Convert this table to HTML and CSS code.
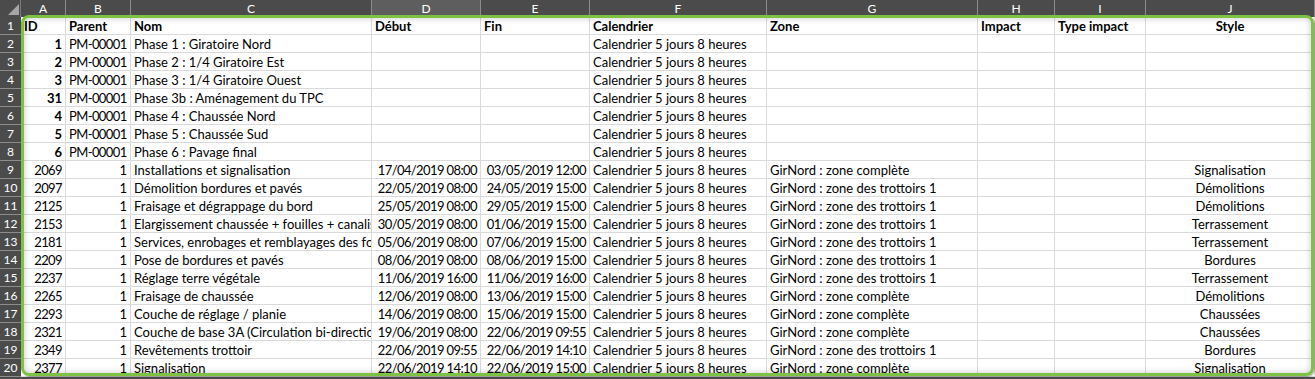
FILE: index.html
```html
<!DOCTYPE html>
<html lang="fr">
<head>
<meta charset="utf-8">
<title>Feuille</title>
<link rel="stylesheet" href="styles.css">
</head>
<body>
<div class="wrap">
  <div class="sheet">
    <div class="corner"><svg width="11" height="11" viewBox="0 0 11 11"><polygon points="11,0 11,11 0,11" fill="#a6a6a6"/></svg></div>
    <div class="ch">A</div><div class="ch">B</div><div class="ch">C</div><div class="ch ch-sel">D</div><div class="ch">E</div><div class="ch">F</div><div class="ch">G</div><div class="ch">H</div><div class="ch">I</div><div class="ch">J</div>

    <div class="rh">1</div><div class="c b">ID</div><div class="c b">Parent</div><div class="c b">Nom</div><div class="c b">Début</div><div class="c b">Fin</div><div class="c b">Calendrier</div><div class="c b">Zone</div><div class="c b">Impact</div><div class="c b">Type impact</div><div class="c b ctr">Style</div>

    <div class="rh">2</div><div class="c b r">1</div><div class="c n">PM-00001</div><div class="c">Phase 1 : Giratoire Nord</div><div class="c"></div><div class="c"></div><div class="c">Calendrier 5 jours 8 heures</div><div class="c"></div><div class="c"></div><div class="c"></div><div class="c"></div>
    <div class="rh">3</div><div class="c b r">2</div><div class="c n">PM-00001</div><div class="c">Phase 2 : 1/4 Giratoire Est</div><div class="c"></div><div class="c"></div><div class="c">Calendrier 5 jours 8 heures</div><div class="c"></div><div class="c"></div><div class="c"></div><div class="c"></div>
    <div class="rh">4</div><div class="c b r">3</div><div class="c n">PM-00001</div><div class="c">Phase 3 : 1/4 Giratoire Ouest</div><div class="c"></div><div class="c"></div><div class="c">Calendrier 5 jours 8 heures</div><div class="c"></div><div class="c"></div><div class="c"></div><div class="c"></div>
    <div class="rh">5</div><div class="c b r">31</div><div class="c n">PM-00001</div><div class="c">Phase 3b : Aménagement du TPC</div><div class="c"></div><div class="c"></div><div class="c">Calendrier 5 jours 8 heures</div><div class="c"></div><div class="c"></div><div class="c"></div><div class="c"></div>
    <div class="rh">6</div><div class="c b r">4</div><div class="c n">PM-00001</div><div class="c">Phase 4 : Chaussée Nord</div><div class="c"></div><div class="c"></div><div class="c">Calendrier 5 jours 8 heures</div><div class="c"></div><div class="c"></div><div class="c"></div><div class="c"></div>
    <div class="rh">7</div><div class="c b r">5</div><div class="c n">PM-00001</div><div class="c">Phase 5 : Chaussée Sud</div><div class="c"></div><div class="c"></div><div class="c">Calendrier 5 jours 8 heures</div><div class="c"></div><div class="c"></div><div class="c"></div><div class="c"></div>
    <div class="rh">8</div><div class="c b r">6</div><div class="c n">PM-00001</div><div class="c">Phase 6 : Pavage final</div><div class="c"></div><div class="c"></div><div class="c">Calendrier 5 jours 8 heures</div><div class="c"></div><div class="c"></div><div class="c"></div><div class="c"></div>

    <div class="rh">9</div><div class="c r n">2069</div><div class="c r">1</div><div class="c">Installations et signalisation</div><div class="c r n">17/04/2019 08:00</div><div class="c r n">03/05/2019 12:00</div><div class="c">Calendrier 5 jours 8 heures</div><div class="c">GirNord : zone complète</div><div class="c"></div><div class="c"></div><div class="c ctr">Signalisation</div>
    <div class="rh">10</div><div class="c r n">2097</div><div class="c r">1</div><div class="c">Démolition bordures et pavés</div><div class="c r n">22/05/2019 08:00</div><div class="c r n">24/05/2019 15:00</div><div class="c">Calendrier 5 jours 8 heures</div><div class="c">GirNord : zone des trottoirs 1</div><div class="c"></div><div class="c"></div><div class="c ctr">Démolitions</div>
    <div class="rh">11</div><div class="c r n">2125</div><div class="c r">1</div><div class="c">Fraisage et dégrappage du bord</div><div class="c r n">25/05/2019 08:00</div><div class="c r n">29/05/2019 15:00</div><div class="c">Calendrier 5 jours 8 heures</div><div class="c">GirNord : zone des trottoirs 1</div><div class="c"></div><div class="c"></div><div class="c ctr">Démolitions</div>
    <div class="rh">12</div><div class="c r n">2153</div><div class="c r">1</div><div class="c">Elargissement chaussée + fouilles + canalisations</div><div class="c r n">30/05/2019 08:00</div><div class="c r n">01/06/2019 15:00</div><div class="c">Calendrier 5 jours 8 heures</div><div class="c">GirNord : zone des trottoirs 1</div><div class="c"></div><div class="c"></div><div class="c ctr">Terrassement</div>
    <div class="rh">13</div><div class="c r n">2181</div><div class="c r">1</div><div class="c">Services, enrobages et remblayages des fouilles</div><div class="c r n">05/06/2019 08:00</div><div class="c r n">07/06/2019 15:00</div><div class="c">Calendrier 5 jours 8 heures</div><div class="c">GirNord : zone des trottoirs 1</div><div class="c"></div><div class="c"></div><div class="c ctr">Terrassement</div>
    <div class="rh">14</div><div class="c r n">2209</div><div class="c r">1</div><div class="c">Pose de bordures et pavés</div><div class="c r n">08/06/2019 08:00</div><div class="c r n">08/06/2019 15:00</div><div class="c">Calendrier 5 jours 8 heures</div><div class="c">GirNord : zone des trottoirs 1</div><div class="c"></div><div class="c"></div><div class="c ctr">Bordures</div>
    <div class="rh">15</div><div class="c r n">2237</div><div class="c r">1</div><div class="c">Réglage terre végétale</div><div class="c r n">11/06/2019 16:00</div><div class="c r n">11/06/2019 16:00</div><div class="c">Calendrier 5 jours 8 heures</div><div class="c">GirNord : zone des trottoirs 1</div><div class="c"></div><div class="c"></div><div class="c ctr">Terrassement</div>
    <div class="rh">16</div><div class="c r n">2265</div><div class="c r">1</div><div class="c">Fraisage de chaussée</div><div class="c r n">12/06/2019 08:00</div><div class="c r n">13/06/2019 15:00</div><div class="c">Calendrier 5 jours 8 heures</div><div class="c">GirNord : zone complète</div><div class="c"></div><div class="c"></div><div class="c ctr">Démolitions</div>
    <div class="rh">17</div><div class="c r n">2293</div><div class="c r">1</div><div class="c">Couche de réglage / planie</div><div class="c r n">14/06/2019 08:00</div><div class="c r n">15/06/2019 15:00</div><div class="c">Calendrier 5 jours 8 heures</div><div class="c">GirNord : zone complète</div><div class="c"></div><div class="c"></div><div class="c ctr">Chaussées</div>
    <div class="rh">18</div><div class="c r n">2321</div><div class="c r">1</div><div class="c">Couche de base 3A (Circulation bi-directionnelle)</div><div class="c r n">19/06/2019 08:00</div><div class="c r n">22/06/2019 09:55</div><div class="c">Calendrier 5 jours 8 heures</div><div class="c">GirNord : zone complète</div><div class="c"></div><div class="c"></div><div class="c ctr">Chaussées</div>
    <div class="rh">19</div><div class="c r n">2349</div><div class="c r">1</div><div class="c">Revêtements trottoir</div><div class="c r n">22/06/2019 09:55</div><div class="c r n">22/06/2019 14:10</div><div class="c">Calendrier 5 jours 8 heures</div><div class="c">GirNord : zone des trottoirs 1</div><div class="c"></div><div class="c"></div><div class="c ctr">Bordures</div>
    <div class="rh">20</div><div class="c r n">2377</div><div class="c r">1</div><div class="c">Signalisation</div><div class="c r n">22/06/2019 14:10</div><div class="c r n">22/06/2019 15:00</div><div class="c">Calendrier 5 jours 8 heures</div><div class="c">GirNord : zone complète</div><div class="c"></div><div class="c"></div><div class="c ctr">Signalisation</div>
  </div>
  <div class="frame"></div>
</div>
</body>
</html>
```

FILE: styles.css
```css
html, body {
  margin: 0;
  padding: 0;
  background: #ffffff;
}
body {
  width: 1315px;
  height: 379px;
  overflow: hidden;
  font-family: Lato, "Liberation Sans", sans-serif;
}
.wrap {
  position: relative;
  width: 1315px;
  height: 379px;
  background: #4b4b4b;
}
.sheet {
  display: grid;
  grid-template-columns: 21px 45px 65px 241px 109px 109px 177px 211px 77px 91px 169px;
  grid-template-rows: 17px;
  grid-auto-rows: 18px;
  background: #ffffff;
}
.corner {
  background: #4b4b4b;
  display: flex;
  align-items: flex-end;
  justify-content: flex-end;
  padding: 0 1px 2px 0;
  box-sizing: border-box;
  border-right: 1px solid #7a7a7a;
}
.ch {
  background: #4b4b4b;
  color: #ffffff;
  font-size: 12px;
  line-height: 17px;
  text-align: center;
  border-right: 1px solid #8c8c8c;
  box-sizing: border-box;
}
.ch-sel {
  background: #5e5e5e;
}
.rh {
  background: #4b4b4b;
  color: #ffffff;
  font-size: 12px;
  line-height: 18px;
  text-align: center;
  border-bottom: 1px solid #8c8c8c;
  box-sizing: border-box;
}
.c {
  box-sizing: border-box;
  border-right: 1px solid #dadada;
  border-bottom: 1px solid #dadada;
  padding: 1px 3px 0;
  font-size: 13px;
  line-height: 17px;
  color: #000000;
  white-space: nowrap;
  overflow: hidden;
}
.b { font-weight: bold; }
.r { text-align: right; }
.ctr { text-align: center; }
.n { letter-spacing: -0.6px; }
.frame {
  position: absolute;
  left: 21px;
  top: 15px;
  width: 1293px;
  height: 361px;
  box-sizing: border-box;
  border: 3px solid #7dc243;
  border-radius: 8px;
  box-shadow: inset 0 0 7px rgba(0, 0, 0, 0.22), 1px 1px 1px rgba(0, 0, 0, 0.3);
  pointer-events: none;
}
```
